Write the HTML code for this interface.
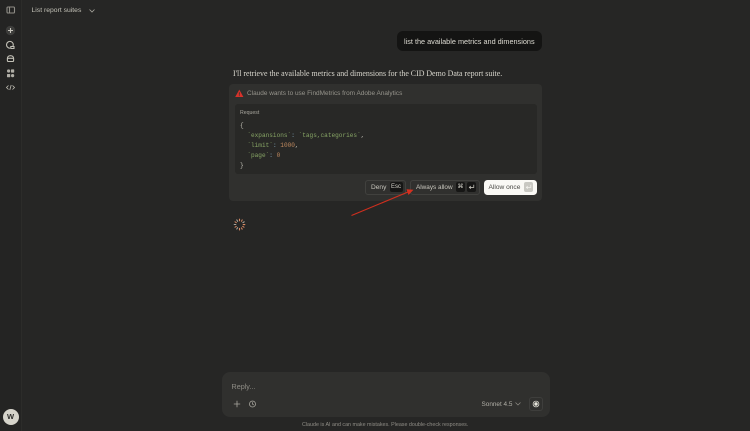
<!DOCTYPE html>
<html>
<head>
<meta charset="utf-8">
<style>
html,body{margin:0;padding:0;width:750px;height:431px;overflow:hidden;background:#262625;font-family:"Liberation Sans",sans-serif;}
#wrap{position:absolute;left:0;top:0;width:750px;height:431px;background:#262625;overflow:hidden;filter:blur(.35px);}
.a{position:absolute;white-space:nowrap;}
#side{position:absolute;left:0;top:0;width:21px;height:431px;background:#242423;border-right:1px solid #2c2c2a;}
svg{position:absolute;overflow:visible;}
.code{font-family:"Liberation Mono",monospace;font-size:6.1px;line-height:10px;color:#c2c0b6;}
.g{color:#87a565}.o{color:#c08a5f}.b{color:#7f9fb0}
.kbd{position:absolute;background:#161615;border-radius:2px;color:#d5d3ca;font-size:6px;text-align:center;height:10px;line-height:10px;top:182px;}
</style>
</head>
<body>
<div id="wrap">
<div id="side"></div>
<svg style="left:0;top:0" width="22" height="100" viewBox="0 0 22 100" fill="none" stroke="#b0aea6" stroke-width="1.1">
<rect x="7" y="7" width="7.5" height="6" rx="1" stroke="#8f8d86"/><line x1="9.5" y1="7" x2="9.5" y2="13" stroke="#8f8d86"/>
<circle cx="10.5" cy="30.5" r="4.7" fill="#3d3d3b" stroke="none"/><path d="M10.5 28v5M8 30.5h5" stroke="#c8c6bd"/>
<path d="M12.8 46.6a3.4 3.4 0 1 0-2.8 1.6M10.8 46.5h3.2v2h-3.2z" stroke="#c2c0b6"/>
<path d="M7.4 58.5c0-3.8 6.2-3.8 6.2 0v2a1 1 0 0 1-1 1h-4.2a1 1 0 0 1-1-1z" stroke="#c2c0b6"/><path d="M7.4 58.3h6.2" stroke="#c2c0b6"/>
<circle cx="8.6" cy="71" r="1.6" fill="#b0aea6" stroke="none"/><rect x="11" y="69.4" width="3.2" height="3.2" rx=".6" fill="#b0aea6" stroke="none"/><rect x="7" y="74" width="3.2" height="3.2" rx=".6" fill="#b0aea6" stroke="none"/><circle cx="12.6" cy="75.6" r="1.6" fill="#b0aea6" stroke="none"/>
<path d="M8.5 85.5l-2 2 2 2M12.5 85.5l2 2-2 2M11.2 85l-1.4 5" stroke="#c2c0b6" stroke-width=".8"/>
</svg>
<div class="a" style="left:31.5px;top:6px;font-size:6.8px;line-height:10px;color:#c2c0b6">List report suites</div>
<svg style="left:88.5px;top:8.5px" width="6" height="4" fill="none" stroke="#a8a69e" stroke-width=".8"><path d="M.5 .5L3 3l2.5-2.5"/></svg>

<div class="a" style="left:397px;top:31px;width:145px;height:20px;background:#141413;border-radius:6px"></div>
<div class="a" style="left:404px;top:36.5px;font-size:7.3px;line-height:10px;color:#dedcd3">list the available metrics and dimensions</div>
<div class="a" style="left:233px;top:68px;font-family:'Liberation Serif',serif;font-size:7.9px;line-height:12px;color:#d8d6cd">I'll retrieve the available metrics and dimensions for the CID Demo Data report suite.</div>

<div class="a" style="left:229px;top:84px;width:313px;height:117px;background:#30302e;border-radius:4px"></div>
<svg style="left:235px;top:89px" width="9" height="9"><path d="M4.3 .6L8.4 8H.2z" fill="#d8322a"/><rect x="3.9" y="3.2" width=".8" height="2.6" fill="#30302e"/><rect x="3.9" y="6.3" width=".8" height=".8" fill="#30302e"/></svg>
<div class="a" style="left:247px;top:88.5px;font-size:6.45px;line-height:10px;color:#96948c">Claude wants to use FindMetrics from Adobe Analytics</div>

<div class="a" style="left:235px;top:104px;width:302px;height:70px;background:#282826;border-radius:3px"></div>
<div class="a" style="left:240px;top:108px;font-size:5.2px;line-height:10px;color:#a8a69e">Request</div>
<div class="a code" style="left:240px;top:120.5px">{<br>&nbsp;&nbsp;<span class="g">`expansions`</span><span class="b">:</span> <span class="g">`tags,categories`</span>,<br>&nbsp;&nbsp;<span class="g">`limit`</span><span class="b">:</span> <span class="o">1000</span>,<br>&nbsp;&nbsp;<span class="g">`page`</span><span class="b">:</span> <span class="o">0</span><br>}</div>

<div class="a" style="left:365px;top:179.5px;width:41px;height:15px;border:1px solid #41413e;border-radius:3px;box-sizing:border-box"></div>
<div class="a" style="left:371px;top:183px;font-size:6.6px;line-height:10px;color:#c8c6bd">Deny</div>
<div class="kbd" style="left:389.5px;width:13px">Esc</div>
<div class="a" style="left:410px;top:179.5px;width:70px;height:15px;border:1px solid #41413e;border-radius:3px;box-sizing:border-box"></div>
<div class="a" style="left:416px;top:183px;font-size:6.4px;line-height:10px;color:#c8c6bd">Always allow</div>
<div class="kbd" style="left:456px;width:9px">⌘</div>
<div class="kbd" style="left:467px;width:9px"></div>
<svg style="left:467px;top:182px" width="9" height="10" fill="none" stroke="#d5d3ca" stroke-width=".7"><path d="M6.8 2.8v2.6H2.4M3.8 4l-1.5 1.4 1.5 1.4"/></svg>
<div class="a" style="left:483.5px;top:179.5px;width:53px;height:15px;background:#faf9f5;border-radius:3.5px"></div>
<div class="a" style="left:488.5px;top:183px;font-size:6.6px;line-height:10px;color:#4a4945">Allow once</div>
<div class="a" style="left:523.5px;top:182px;width:9px;height:10px;background:#c9c8c2;border-radius:2px"></div>
<svg style="left:523.5px;top:182px" width="9" height="10" fill="none" stroke="#f4f3ee" stroke-width=".7"><path d="M6.8 2.8v2.6H2.4M3.8 4l-1.5 1.4 1.5 1.4"/></svg>

<svg style="left:350px;top:188px" width="66" height="30"><path d="M1.5 27.5L58 4" stroke="#d02f1e" stroke-width="1.1"/><path d="M63.5 1.8L56.5 1.2L58.5 7z" fill="#d5301f"/></svg>

<svg style="left:233px;top:218px" width="13" height="13" stroke="#c9805f" stroke-width="1.1" stroke-linecap="round">
<path d="M6.5 1.2v1.6" stroke="#d98a63"/><path d="M9.2 1.9L8.5 3.3"/><path d="M11.2 3.8L9.9 4.6" stroke="#a8a69e"/><path d="M11.8 6.6H10.2" stroke="#d98a63"/><path d="M11 9.2L9.7 8.4"/><path d="M9.2 11.2L8.4 9.9"/><path d="M6.5 12V10.4" stroke="#d98a63"/><path d="M3.8 11L4.6 9.7" stroke="#a8a69e"/><path d="M2 9.2L3.3 8.4"/><path d="M1.2 6.5H2.8" stroke="#a8a69e"/><path d="M2 3.8L3.3 4.6"/><path d="M3.8 1.9L4.6 3.3" stroke="#a8a69e"/>
</svg>

<div class="a" style="left:222px;top:372px;width:328px;height:45px;background:#30302e;border-radius:8px"></div>
<div class="a" style="left:231.5px;top:381.5px;font-size:7.2px;line-height:10px;color:#8f8d86">Reply...</div>
<svg style="left:233px;top:400px" width="24" height="8" fill="none" stroke="#a8a69e" stroke-width=".8"><path d="M4 .8v6.4M.8 4h6.4"/><circle cx="19.5" cy="4" r="3"/><path d="M19.5 2.3V4l1.2.9"/></svg>
<div class="a" style="left:481.5px;top:400px;font-size:6.4px;line-height:10px;color:#b0aea6">Sonnet 4.5</div>
<svg style="left:515px;top:402px" width="6" height="4" fill="none" stroke="#8f8d86" stroke-width=".7"><path d="M.5 .5L3 3l2.5-2.5"/></svg>
<div class="a" style="left:529px;top:396.5px;width:14px;height:14.5px;border:1px solid #3e3e3c;border-radius:3px;box-sizing:border-box"></div>
<svg style="left:532px;top:400px" width="8" height="8"><circle cx="4" cy="4" r="2.9" fill="none" stroke="#d5d3ca" stroke-width=".8"/><circle cx="4" cy="4" r="1.7" fill="#e8e6dd"/></svg>
<div class="a" style="left:302px;top:419.5px;font-size:5.35px;line-height:10px;color:#8f8d86">Claude is AI and can make mistakes. Please double-check responses.</div>

<div class="a" style="left:2.5px;top:409px;width:16px;height:16px;border-radius:50%;background:#d6d4cb;color:#2b2b29;font-size:7.5px;font-weight:bold;line-height:16px;text-align:center">W</div>
</div>
</body>
</html>
